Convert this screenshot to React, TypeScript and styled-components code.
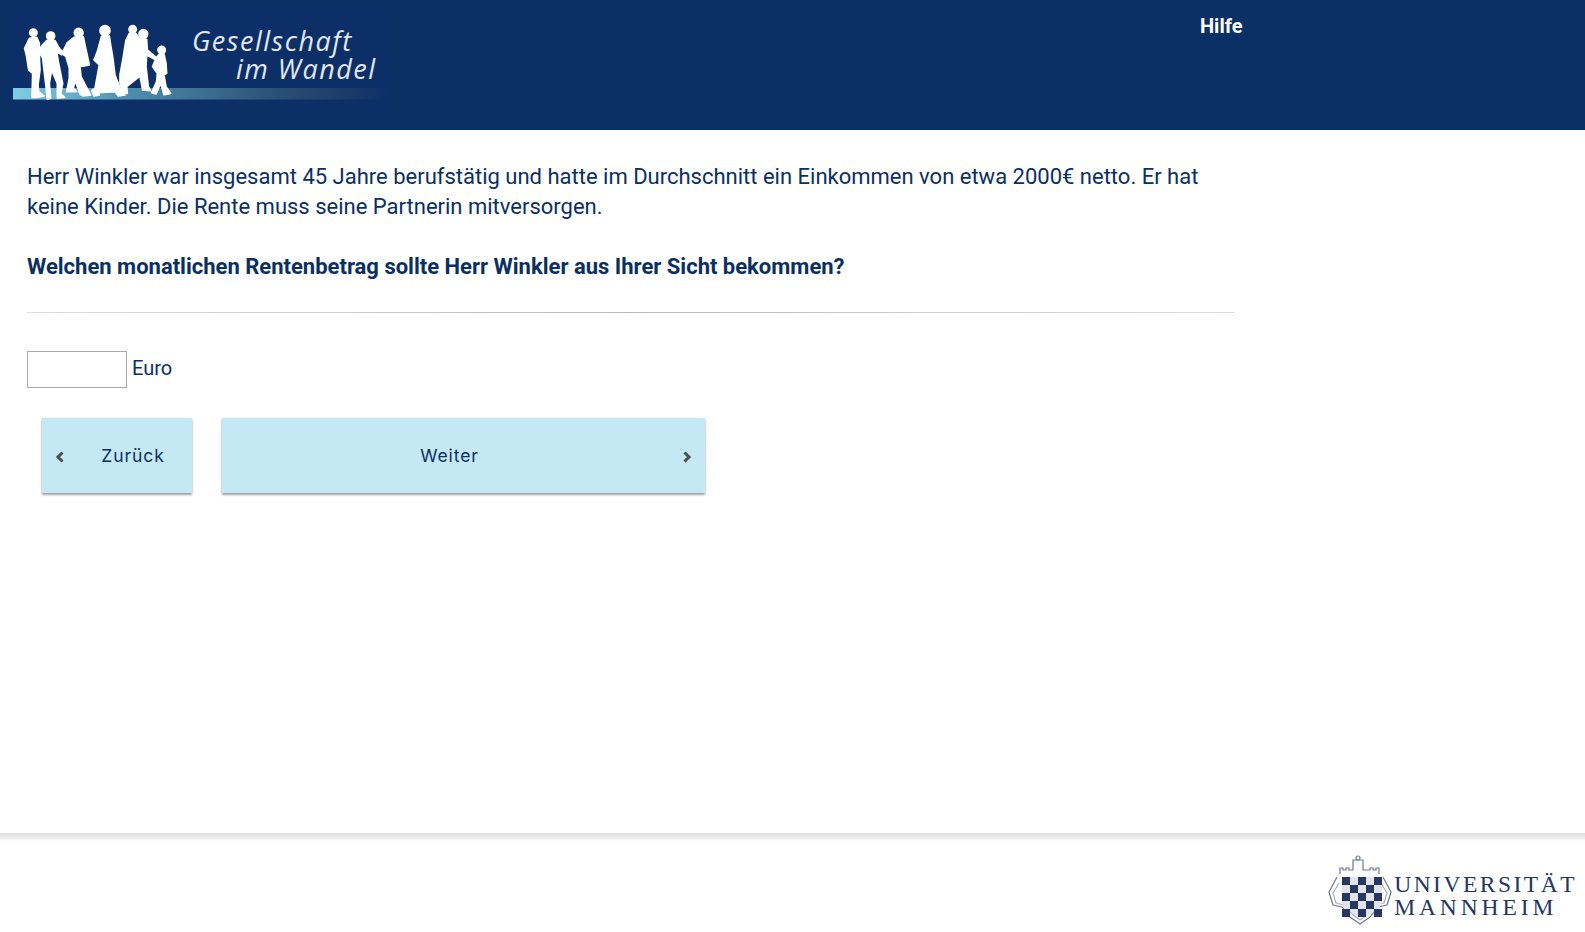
import React from 'react'
import styled, { createGlobalStyle } from 'styled-components'

const GlobalStyle = createGlobalStyle`
  html, body {
    margin: 0;
    padding: 0;
    background: #fff;
  }
  body {
    font-family: Roboto, "Liberation Sans", sans-serif;
    color: #0a2f63;
  }
`

const Page = styled.div`
  height: 932px;
  display: flex;
  flex-direction: column;
  overflow: hidden;
`

const Header = styled.header`
  height: 130px;
  flex: none;
  background: #0a3066;
  display: flex;
  align-items: flex-start;
  padding: 12px 0 0 12px;
  box-sizing: border-box;
`

const HelpLink = styled.a`
  margin: 3px 0 0 812px;
  color: #fff;
  font-size: 20px;
  font-weight: 700;
  line-height: 22px;
`

const Main = styled.main`
  flex: 1;
  padding: 32px 0 0 27px;
  width: 1208px;
`

const Paragraph = styled.p`
  margin: 0;
  font-size: 22px;
  line-height: 30px;
`

const Question = styled.p`
  margin: 30px 0 0;
  font-size: 22px;
  line-height: 30px;
  font-weight: 700;
`

const Rule = styled.hr`
  margin: 30px 0 0;
  border: 0;
  height: 1px;
  background: linear-gradient(90deg, #ddd, #bbb 50%, #ddd);
`

const AnswerRow = styled.div`
  display: flex;
  align-items: center;
  gap: 5px;
  margin-top: 38px;
`

const AmountInput = styled.input`
  width: 100px;
  height: 37px;
  box-sizing: border-box;
  border: 1px solid #aaa;
  background: #fff;
  padding: 0 6px;
`

const Unit = styled.span`
  font-size: 20px;
  line-height: 30px;
  margin-top: -3px;
`

const ButtonRow = styled.div`
  display: flex;
  gap: 30px;
  margin: 30px 0 0 15px;
`

const NavButton = styled.button<{ $wide?: boolean }>`
  position: relative;
  width: ${(props) => (props.$wide ? '483px' : '150px')};
  height: 75px;
  border: 0;
  background: #c5e8f5;
  color: #0a2f63;
  font-family: Inter, "Open Sans", sans-serif;
  font-size: 17.5px;
  letter-spacing: 0.9px;
  box-shadow: 0 2px 2px rgba(0, 0, 0, 0.35), 0 0 3px rgba(0, 0, 0, 0.1);
`

const ButtonLabel = styled.span<{ $shift: number }>`
  display: block;
  transform: translateX(${(props) => props.$shift}px);
`

const Chevron = styled.svg<{ $side: 'left' | 'right' }>`
  position: absolute;
  top: 33px;
  ${(props) => props.$side}: 13px;
  width: 10px;
  height: 12px;
`

const Footer = styled.footer`
  height: 99px;
  flex: none;
  background: linear-gradient(#e2e2e2, #e6e6e6 40%, #fff) 0 0 / 100% 8px no-repeat;
  display: flex;
  justify-content: flex-end;
  padding: 22px 8px 0 0;
  box-sizing: border-box;
`

const Crest = styled.div`
  display: flex;
  align-items: flex-start;
`

const UniName = styled.div`
  padding-top: 18px;
  font-family: "Liberation Serif", serif;
  font-size: 23.5px;
  line-height: 23px;
  color: #25365f;
`

const UniLine = styled.div<{ $spacing: number }>`
  letter-spacing: ${(props) => props.$spacing}px;
  white-space: nowrap;
`

const LogoArt = styled.svg`
  display: block;
  flex: none;
`

const people = [
  'M28 55L50 52 58 70 58 110 60 150 54 195 56 215 72 228 50 232 36 232 38 160 26 150 20 110 14 85Z',
  'M80 62L105 62 118 85 130 98 125 104 110 95 115 125 128 190 122 222 134 232 112 234 112 190 95 150 88 190 92 235 82 238 78 200 72 150 68 115 55 92 70 72Z',
  'M162 52L190 50 195 75 208 135 180 140 183 170 208 218 212 225 190 228 180 222 165 180 160 205 170 215 140 215 148 175 148 145 138 110 125 100 132 88 142 68Z',
  'M245 48L268 48 272 75 278 110 285 165 300 205 315 225 295 228 285 215 235 218 238 225 222 228 215 212 225 205 238 135 222 120 232 95Z',
  'M328 40L348 40 358 56 380 58 382 90 408 112 404 118 380 105 378 140 385 200 392 212 368 210 360 168 320 200 322 220 308 218 300 190 300 165 310 110 318 60Z',
  'M418 102L432 102 438 130 440 160 432 165 438 200 452 220 432 224 422 190 408 222 395 218 410 185 412 160 398 140 408 115Z',
]

const heads = [
  { cx: 40, cy: 38, r: 11 },
  { cx: 92, cy: 48, r: 12 },
  { cx: 176, cy: 38, r: 13 },
  { cx: 255, cy: 32, r: 15 },
  { cx: 338, cy: 28, r: 11 },
  { cx: 370, cy: 42, r: 13 },
  { cx: 425, cy: 90, r: 11 },
]

function SiteLogo() {
  return (
    <LogoArt width="376" height="100" viewBox="12 12 376 100" role="img" aria-label="Gesellschaft im Wandel">
      <defs>
        <linearGradient id="band">
          <stop offset="0" stopColor="#7fcde4" />
          <stop offset="0.3" stopColor="#4f8fb0" />
          <stop offset="0.7" stopColor="#2b5075" />
          <stop offset="0.9" stopColor="#1a3a68" />
          <stop offset="1" stopColor="#0c2f68" />
        </linearGradient>
      </defs>
      <rect x="12" y="12" width="376" height="100" fill="#0c2f68" />
      <rect x="13" y="88" width="375" height="11.5" fill="url(#band)" />
      <g
        transform="translate(20 20) scale(0.3333)"
        fill="#fff"
        stroke="#fff"
        strokeWidth="5"
        strokeLinejoin="round"
      >
        {people.map((d) => (
          <path key={d} d={d} />
        ))}
        {heads.map((head) => (
          <circle key={head.cx} {...head} />
        ))}
      </g>
      <text
        x="192"
        y="51"
        fill="#e3e8f0"
        fontFamily="'Open Sans', sans-serif"
        fontStyle="italic"
        fontSize="27"
        letterSpacing="1.5"
      >
        Gesellschaft
      </text>
      <text
        x="236"
        y="79"
        fill="#e3e8f0"
        fontFamily="'Open Sans', sans-serif"
        fontStyle="italic"
        fontSize="27"
        letterSpacing="1.5"
      >
        im Wandel
      </text>
    </LogoArt>
  )
}

function Shield() {
  const cells: React.ReactNode[] = []
  for (let row = 0; row < 5; row++) {
    for (let col = 0; col < 5; col++) {
      if ((row + col) % 2 === 0) {
        cells.push(<rect key={`${row}-${col}`} x={14 + col * 8} y={22 + row * 8} width="8" height="8" fill="#29375f" />)
      }
    }
  }
  return (
    <svg width="66" height="70" viewBox="0 0 66 70" aria-hidden="true">
      <g fill="none" stroke="#6d7896" strokeWidth="1.2">
        <path d="M12 19v-6h3v2h3v-2h3v2h4V5h10v10h7v-2h3v2h3v-2h3v6" />
        <circle cx="30" cy="3" r="2" fill="#fff" />
        <path d="M9 22l-8 15 4 13 9 2 8 10 10 7 10-7 8-10 9-2 4-13-8-15" />
        <path d="M11 28l-6 10 3 10 8 2 8 9 8 6 8-6 8-9 8-2 3-10-6-10" stroke="#aab1c4" />
      </g>
      <path d="M14 22h40v26c-2 7-11 11-20 15-9-4-18-8-20-15z" fill="#dfe3ec" />
      {cells}
    </svg>
  )
}

export default function App() {
  return (
    <Page>
      <GlobalStyle />
      <Header>
        <SiteLogo />
        <HelpLink>Hilfe</HelpLink>
      </Header>
      <Main>
        <Paragraph>
          Herr Winkler war insgesamt 45 Jahre berufstätig und hatte im Durchschnitt ein Einkommen von etwa 2000€ netto. Er
          hat keine Kinder. Die Rente muss seine Partnerin mitversorgen.
        </Paragraph>
        <Question>Welchen monatlichen Rentenbetrag sollte Herr Winkler aus Ihrer Sicht bekommen?</Question>
        <Rule />
        <AnswerRow>
          <AmountInput type="text" />
          <Unit>Euro</Unit>
        </AnswerRow>
        <ButtonRow>
          <NavButton>
            <Chevron $side="left" viewBox="0 0 10 12">
              <path d="M7.5 1.5 3 6l4.5 4.5" fill="none" stroke="#4a4f57" strokeWidth="3" />
            </Chevron>
            <ButtonLabel $shift={16}>Zurück</ButtonLabel>
          </NavButton>
          <NavButton $wide>
            <ButtonLabel $shift={-14}>Weiter</ButtonLabel>
            <Chevron $side="right" viewBox="0 0 10 12">
              <path d="M2.5 1.5 7 6l-4.5 4.5" fill="none" stroke="#4a4f57" strokeWidth="3" />
            </Chevron>
          </NavButton>
        </ButtonRow>
      </Main>
      <Footer>
        <Crest>
          <Shield />
          <UniName>
            <UniLine $spacing={2.5}>UNIVERSITÄT</UniLine>
            <UniLine $spacing={3.9}>MANNHEIM</UniLine>
          </UniName>
        </Crest>
      </Footer>
    </Page>
  )
}
